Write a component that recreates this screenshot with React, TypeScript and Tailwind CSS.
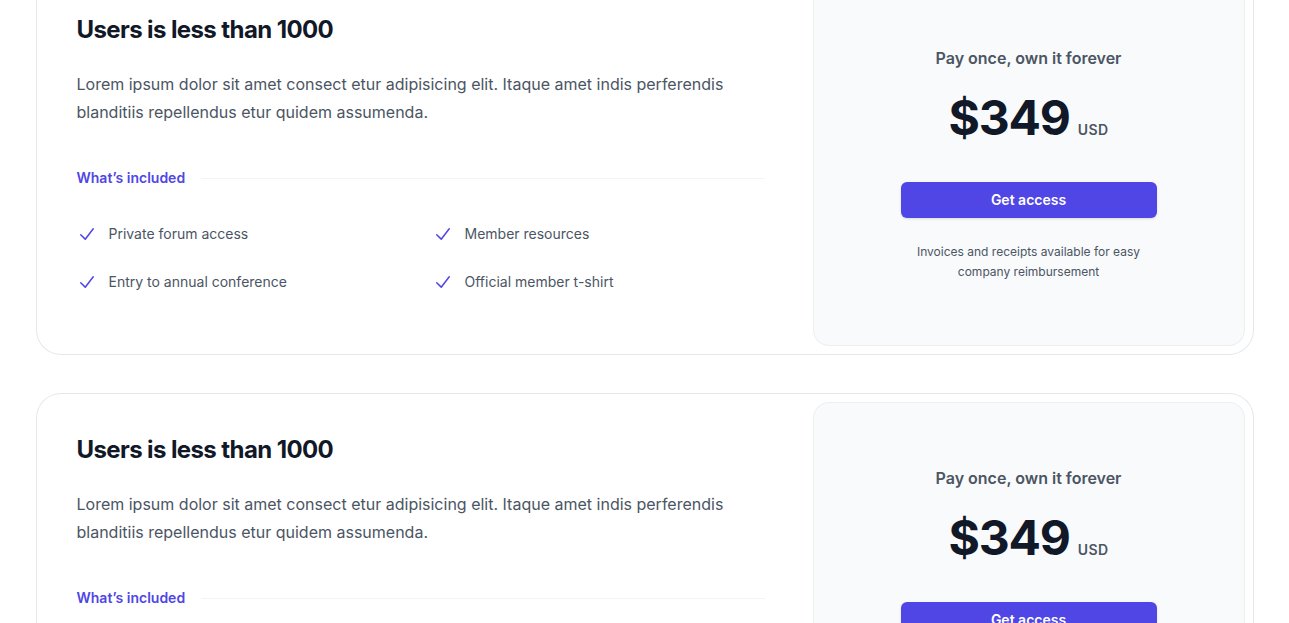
import React from "react";

const features = [
  "Private forum access",
  "Member resources",
  "Entry to annual conference",
  "Official member t-shirt",
];

function Check() {
  return (
    <svg viewBox="0 0 20 20" fill="currentColor" aria-hidden="true" className="h-6 w-5 flex-none text-[#4f46e5]">
      <path
        fillRule="evenodd"
        d="M16.704 4.153a.75.75 0 01.143 1.052l-8 10.5a.75.75 0 01-1.127.075l-4.5-4.5a.75.75 0 011.06-1.06l3.894 3.893 7.48-9.817a.75.75 0 011.05-.143z"
        clipRule="evenodd"
      />
    </svg>
  );
}

function Card() {
  return (
    <div className="mx-auto flex rounded-3xl ring-1 ring-[#e5e7eb]">
      <div className="flex-auto p-10">
        <h3 className="text-2xl font-bold leading-8 tracking-tight text-[#111827]">Users is less than 1000</h3>
        <p className="mt-6 text-base leading-7 text-[#4b5563]">
          Lorem ipsum dolor sit amet consect etur adipisicing elit. Itaque amet indis perferendis blanditiis repellendus etur quidem assumenda.
        </p>
        <div className="mt-10 flex items-center gap-x-4">
          <h4 className="flex-none text-sm font-semibold leading-6 text-[#4f46e5]">What’s included</h4>
          <div className="h-px flex-auto bg-[#f3f4f6]" />
        </div>
        <ul className="mt-8 grid grid-cols-2 gap-6 text-sm leading-6 text-[#4b5563]">
          {features.map((f) => (
            <li key={f} className="flex gap-x-3">
              <Check />
              {f}
            </li>
          ))}
        </ul>
      </div>
      <div className="w-full max-w-md flex-shrink-0 p-2">
        <div className="flex h-full flex-col justify-center rounded-2xl bg-[#f9fafb] py-16 text-center ring-1 ring-inset ring-[#1118270d]">
          <div className="mx-auto max-w-xs px-8">
            <p className="text-base font-semibold leading-6 text-[#4b5563]">Pay once, own it forever</p>
            <p className="mt-6 flex items-baseline justify-center gap-x-2">
              <span className="text-5xl font-bold leading-none tracking-tight text-[#111827]">$349</span>
              <span className="text-sm font-semibold leading-6 tracking-wide text-[#4b5563]">USD</span>
            </p>
            <a href="#" className="mt-10 block w-full rounded-md bg-[#4f46e5] px-3 py-2 text-center text-sm font-semibold leading-5 text-white shadow-sm">
              Get access
            </a>
            <p className="mt-6 text-xs leading-5 text-[#4b5563]">Invoices and receipts available for easy company reimbursement</p>
          </div>
        </div>
      </div>
    </div>
  );
}

export default function App() {
  return (
    <div className="min-h-screen overflow-hidden bg-white" style={{ fontFamily: "Inter, 'Noto Sans', sans-serif" }}>
      <div className="mx-auto -mt-[26px] max-w-7xl px-8">
        <div className="flex flex-col gap-10">
          <Card />
          <Card />
        </div>
      </div>
    </div>
  );
}
